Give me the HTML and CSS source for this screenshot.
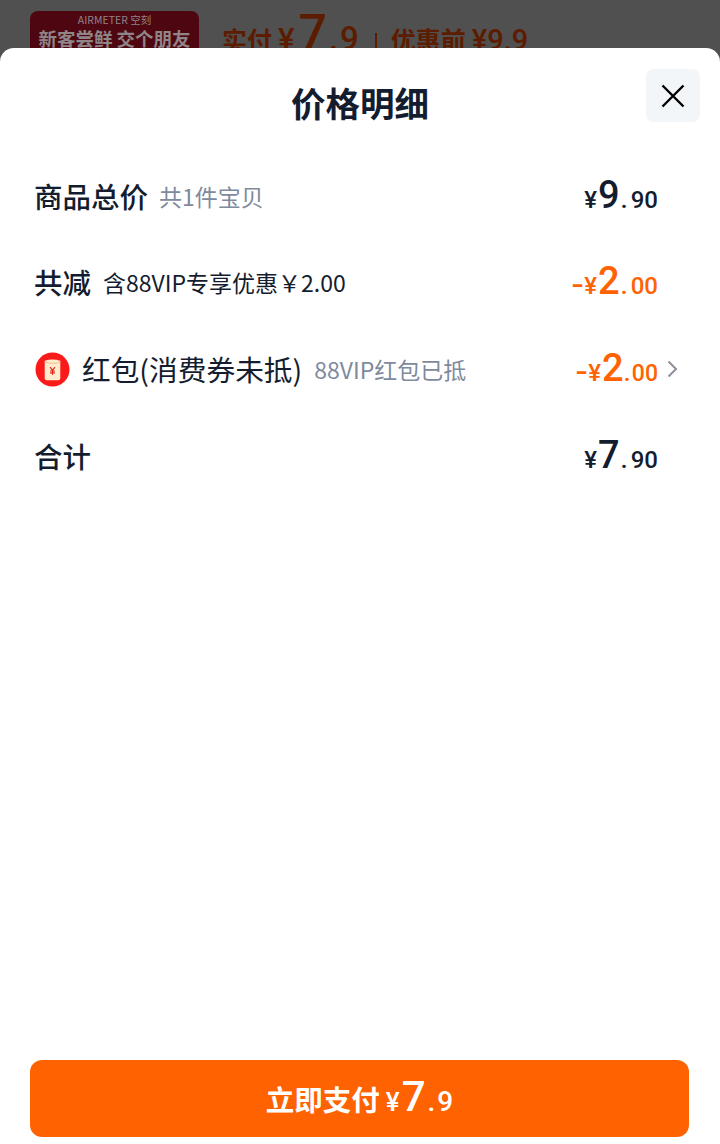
FILE: index.html
```html
<!DOCTYPE html>
<html lang="zh">
<head>
<meta charset="utf-8">
<title>价格明细</title>
<link rel="stylesheet" href="styles.css">
</head>
<body>
<div class="page">
  <header class="backdrop">
    <div class="promo">
      <div class="promo-brand">AIRMETER 空刻</div>
      <div class="promo-text">新客尝鲜 交个朋友</div>
    </div>
    <div class="backdrop-price">
      <span class="bp-label">实付</span>
      <span class="bp-yen">¥</span><span class="bp-big">7</span><span class="bp-small">.9</span>
      <span class="bp-sep"></span>
      <span class="bp-label">优惠前</span><span class="bp-old">¥9.9</span>
    </div>
  </header>
  <main class="sheet">
    <div class="sheet-head">
      <h1 class="title">价格明细</h1>
      <button class="close" aria-label="关闭">
        <svg width="24" height="24" viewBox="0 0 24 24"><path d="M1.500 1.500 22.500 22.500M22.500 1.500 1.500 22.500" fill="none" stroke="#000" stroke-width="2.400"/></svg>
      </button>
    </div>
    <section class="rows">
      <div class="row">
        <div class="row-left"><span class="label">商品总价</span><span class="note first">共1件宝贝</span></div>
        <div class="price"><span class="yen">¥</span><span class="int">9</span><span class="dot">.</span><span class="dec">90</span></div>
      </div>
      <div class="row">
        <div class="row-left"><span class="label">共减</span><span class="note dark">含88VIP专享优惠￥2.00</span></div>
        <div class="price orange"><span class="minus">-</span><span class="yen">¥</span><span class="int">2</span><span class="dot">.</span><span class="dec">00</span></div>
      </div>
      <div class="row row-link">
        <div class="row-left">
          <svg class="hb" width="36" height="36" viewBox="0 0 36 36">
            <circle cx="18" cy="18" r="17.500" fill="#fb1a1a"/>
            <path d="M10 9Q18 6.500 26 9V27Q26 29 24 29H12Q10 29 10 27Z" fill="#fdeccd"/>
            <path d="M10 10Q18 13.500 26 10" fill="none" stroke="#f3b98d" stroke-width="1"/>
            <path d="M15.500 15.500 18 18.800 20.500 15.500M18 18.800V23.500M15.500 19.500H20.500M15.500 21.500H20.500" fill="none" stroke="#e0231b" stroke-width="1.200"/>
          </svg>
          <span class="label light">红包(消费券未抵)</span><span class="note">88VIP红包已抵</span>
        </div>
        <div class="price-wrap">
          <div class="price orange"><span class="minus">-</span><span class="yen">¥</span><span class="int">2</span><span class="dot">.</span><span class="dec">00</span></div>
          <svg class="chev" width="11" height="18" viewBox="0 0 11 18"><path d="M1.500 1.500 9 9 1.500 16.500" fill="none" stroke="#8f8f9b" stroke-width="2"/></svg>
        </div>
      </div>
      <div class="row">
        <div class="row-left"><span class="label">合计</span></div>
        <div class="price"><span class="yen">¥</span><span class="int">7</span><span class="dot">.</span><span class="dec">90</span></div>
      </div>
    </section>
    <button class="pay"><span class="pay-text">立即支付</span><span class="pay-yen">¥</span><span class="pay-int">7</span><span class="pay-dot">.</span><span class="pay-dec">9</span></button>
  </main>
</div>
</body>
</html>
```
FILE: styles.css
```css
* { box-sizing: border-box; }
html, body { margin: 0; padding: 0; }
body {
  background: #505050;
  font-family: "Noto Sans CJK SC", "Noto Sans", sans-serif;
  color: #141d2f;
}
.page {
  width: 720px;
  height: 1144px;
  display: flex;
  flex-direction: column;
  overflow: hidden;
}
.backdrop {
  height: 48px;
  flex: none;
  display: flex;
  align-items: flex-start;
  padding: 11px 0 0 30px;
  gap: 23px;
  overflow: hidden;
}
.promo {
  width: 169px;
  height: 60px;
  flex: none;
  background: #4e0710;
  border-radius: 8px;
  text-align: center;
  color: #8f8488;
}
.promo-brand { font-size: 10.500px; line-height: 12px; padding-top: 3px; }
.promo-text { font-size: 18.500px; line-height: 24px; font-weight: 700; white-space: nowrap; }
.backdrop-price {
  display: flex;
  align-items: baseline;
  color: #5c1c00;
  font-weight: 500;
  height: 60px;
  white-space: nowrap;
  line-height: 45px;
  font-family: "Roboto", "Noto Sans CJK SC", sans-serif;
}
.bp-label { font-size: 25px; font-weight: 700; font-family: "Noto Sans CJK SC", sans-serif; }
.bp-yen { font-size: 31px; margin-left: 6px; }
.bp-big { font-size: 50px; margin-left: 4px; }
.bp-small { font-size: 33px; margin-left: 2px; letter-spacing: 2px; }
.bp-sep { width: 2px; height: 17px; background: #5c1c00; margin: 0 14px; align-self: center; }
.bp-old { font-size: 29px; margin-left: 6px; }
.sheet {
  flex: 1;
  background: #fff;
  border-radius: 14px 14px 0 0;
  display: flex;
  flex-direction: column;
  padding: 0 30px 7px;
}
.sheet-head {
  position: relative;
  height: 104.500px;
  flex: none;
  display: flex;
  justify-content: center;
  align-items: center;
  padding-top: 3px;
}
.title {
  margin: 0;
  font-size: 34.500px;
  line-height: 44px;
  font-weight: 700;
  color: #141d2f;
}
.close {
  position: absolute;
  top: 21px;
  right: -10px;
  width: 54px;
  height: 53px;
  border: 0;
  padding: 0;
  border-radius: 8px;
  background: #f3f6f9;
  display: flex;
  align-items: center;
  justify-content: center;
}
.rows {
  flex: 1;
  display: flex;
  flex-direction: column;
  padding-left: 4px;
}
.row {
  height: 86.670px;
  display: flex;
  align-items: center;
  justify-content: space-between;
  padding-right: 32px;
}
.row-link { padding-right: 12px; }
.row-left { display: flex; align-items: center; }
.label { font-size: 28.500px; line-height: 40px; font-weight: 500; color: #141d2f; }
.label.light { font-weight: 400; font-size: 28.700px; }
.note { font-size: 23px; line-height: 36px; margin-left: 12px; color: #7f8a9d; }
.note.first { margin-left: 11px; }
.note.dark { color: #141d2f; margin-left: 12px; }
.hb { margin: 0 12px 0 1px; flex: none; width: 35px; height: 35px; }
.price {
  display: flex;
  align-items: baseline;
  color: #141d2f;
  font-family: "Roboto", "Noto Sans", sans-serif;
  white-space: nowrap;
  line-height: 40px;
  padding-top: 3px;
}
.price.orange { color: #ff6200; }
.minus {
  display: inline-block;
  font-size: 26px;
  font-weight: 700;
  transform: scaleX(1.300);
  transform-origin: left center;
  margin-right: 3px;
}
.yen { font-size: 24px; font-weight: 500; }
.int { font-size: 38px; font-weight: 500; margin-left: 1px; }
.dot { font-size: 26px; font-weight: 500; margin: 0 3px 0 1px; }
.dec { font-size: 24px; font-weight: 500; }
.row-link .dot { margin: 0 1px 0 0; }
.row-link .dec { font-size: 23px; }
.price-wrap { display: flex; align-items: center; gap: 9px; }
.chev { flex: none; }
.pay {
  height: 77px;
  flex: none;
  width: 659px;
  border: 0;
  border-radius: 12px;
  background: #ff6200;
  color: #fff;
  display: flex;
  align-items: baseline;
  justify-content: center;
  padding: 12px 0 0;
  font-family: "Roboto", "Noto Sans CJK SC", sans-serif;
}
.pay-text { font-family: "Noto Sans CJK SC", sans-serif; font-size: 28.500px; font-weight: 700; }
.pay-yen { font-size: 26px; font-weight: 500; margin-left: 6px; }
.pay-int { font-size: 42px; font-weight: 500; margin-left: 2px; }
.pay-dot { font-size: 28px; font-weight: 500; margin: 0 2px; }
.pay-dec { font-size: 28px; font-weight: 500; }
```
